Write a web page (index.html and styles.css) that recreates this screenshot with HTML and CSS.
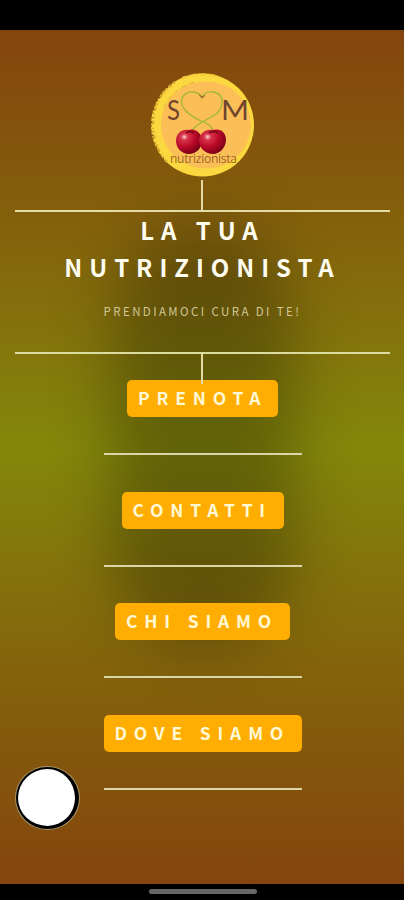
FILE: index.html
```html
<!DOCTYPE html>
<html lang="it">
<head>
<meta charset="utf-8">
<title>La tua nutrizionista</title>
<link rel="stylesheet" href="styles.css">
</head>
<body>
<div class="phone">
  <div class="status-bar"></div>
  <main class="screen">
    <header class="hero">
      <svg class="logo" viewBox="0 0 110 112" width="110" height="112">
        <defs>
          <radialGradient id="cherry" cx=".32" cy=".3" r=".75">
            <stop offset="0" stop-color="#fbd2d4"/>
            <stop offset=".18" stop-color="#d83349"/>
            <stop offset=".55" stop-color="#ba0a28"/>
            <stop offset="1" stop-color="#750016"/>
          </radialGradient>
        </defs>
        <circle cx="55.500" cy="57" r="51.500" fill="#fbd83f"/>
        <path d="M28 14Q5 30 6 60Q8 82 20 94" fill="none" stroke="#d9ac30" stroke-width="2.500" stroke-dasharray="2 2 4 3 1 2"/>
        <path d="M24 16Q3 35 4.500 61Q7 80 18 93" fill="none" stroke="#865010" stroke-width="1.200" stroke-dasharray="1 3 2 2 1 4"/>
        <path d="M35 10Q55 3 72 9" fill="none" stroke="#f0ca38" stroke-width="2" stroke-dasharray="5 2 2 1"/>
        <ellipse cx="59" cy="57" rx="45" ry="43.500" fill="#fcbf57"/>
        <path d="M17 39Q25 21 48 14" fill="none" stroke="#dba53b" stroke-width="1" stroke-dasharray="4 2 1 2"/>
        <path d="M43 67C45 58 57 53 66 48C77 42 79 27 67 24C60 23 56 26 55 30C52 23 42 22 37 27C29 37 41 47 54 53C63 56 67 61 66 67" fill="none" stroke="#a0b637" stroke-width="1.300"/>
        <path d="M52.500 27L55 29.500L58 27.500" fill="none" stroke="#9b6932" stroke-width="1.300"/>
        <path d="M42 62c7-2 13 4 13 11s-6 13-13 13-13-6-13-13 5-12 13-11Z" fill="url(#cherry)"/>
        <path d="M66 62c8-2 13 3 13 10s-6 14-13 14-14-6-14-13 6-12 14-11Z" fill="url(#cherry)"/>
        <path d="M39 65q4-3 8 0M62 65q5-3 9 0" fill="none" stroke="#6d0715" stroke-width="1.500"/>
        <text class="logo-letter" x="20" y="52" textLength="13" lengthAdjust="spacingAndGlyphs">S</text>
        <text class="logo-letter" x="74" y="52" textLength="28" lengthAdjust="spacingAndGlyphs">M</text>
        <text class="logo-word" x="23" y="95" textLength="67">nutrizionista</text>
      </svg>
      <div class="stem"></div>
      <div class="heading">
        <h1>LA TUA<br>NUTRIZIONISTA</h1>
        <p>PRENDIAMOCI CURA DI TE!</p>
      </div>
      <div class="stem stem-lower"></div>
    </header>
    <nav class="menu">
      <div class="item"><a class="prenota">PRENOTA</a></div>
      <div class="item"><a class="contatti">CONTATTI</a></div>
      <div class="item"><a class="chi">CHI SIAMO</a></div>
      <div class="item"><a class="dove">DOVE SIAMO</a></div>
    </nav>
    <div class="bubble"></div>
  </main>
  <div class="nav-bar"><span></span></div>
</div>
</body>
</html>
```
FILE: styles.css
```css
* { box-sizing: border-box; }
body { margin: 0; background: #000; font-family: "Noto Sans CJK JP", "Open Sans", sans-serif; color: #fffdf0; }
.phone { position: relative; width: 404px; height: 900px; display: flex; flex-direction: column; overflow: hidden; }
.status-bar { height: 30px; flex: none; background: #000; }
.screen {
  position: relative;
  height: 854px;
  flex: none;
  overflow: hidden;
  background: linear-gradient(#84450d 0%, #84600c 22%, #84870b 49%, #84600c 77%, #84450d 100%);
}
.screen::before {
  content: "";
  position: absolute;
  left: 112px;
  top: 195px;
  width: 182px;
  height: 425px;
  border-radius: 91px;
  background: rgba(0, 0, 0, .26);
  filter: blur(30px);
}
.hero { position: relative; display: flex; flex-direction: column; align-items: center; padding-top: 38px; }
.logo { display: block; }
.logo-letter { font-family: Lato, sans-serif; font-size: 27px; fill: #70442e; }
.logo-word { font-family: "Open Sans", sans-serif; font-size: 12px; fill: #9d6428; }
.stem { width: 2px; height: 30px; background: #e4d9a2; margin-right: 1px; }
.heading {
  width: 375px;
  height: 144px;
  border-top: 2px solid #e4dca6;
  border-bottom: 2px solid #dddca0;
  margin-left: 1px;
  text-align: center;
}
h1 { margin: 0; font-size: 24px; line-height: 36.5px; font-weight: 700; letter-spacing: 6.95px; white-space: nowrap; }
p { margin: 17px 0 0; font-size: 11.5px; line-height: 18px; letter-spacing: 2.4px; color: #d0c795; white-space: nowrap; }
.stem-lower { z-index: 1; height: 30px; margin-bottom: -4px; }
.menu { position: relative; display: flex; flex-direction: column; align-items: center; padding-left: 1px; }
.item { width: 198px; height: 111.7px; display: flex; flex-direction: column; align-items: center; }
.item::after { content: ""; width: 198px; height: 2px; background: #dad6a7; margin-top: 36px; flex: none; }
.item a {
  height: 37px;
  flex: none;
  padding-left: 11px;
  border-radius: 5px;
  background: #ffad00;
  color: #fff8d5;
  font-size: 17.5px;
  line-height: 35px;
  font-weight: 700;
  letter-spacing: 6.8px;
  white-space: nowrap;
}
.prenota { width: 151px; }
.contatti { width: 162px; }
.chi { width: 175px; }
.dove { width: 198px; }
.bubble {
  position: absolute;
  left: 16px;
  top: 737px;
  width: 63px;
  height: 62px;
  border: 2px solid #000;
  border-right-width: 4px;
  border-bottom-width: 3px;
  border-radius: 50%;
  background: #fff;
  box-shadow: 0 0 0 1px #aa956b;
}
.nav-bar { flex: 1; display: flex; justify-content: center; padding: 5px 0 0 1px; background: #000; }
.nav-bar span { width: 108px; height: 5px; border-radius: 3px; background: #666; }
```
